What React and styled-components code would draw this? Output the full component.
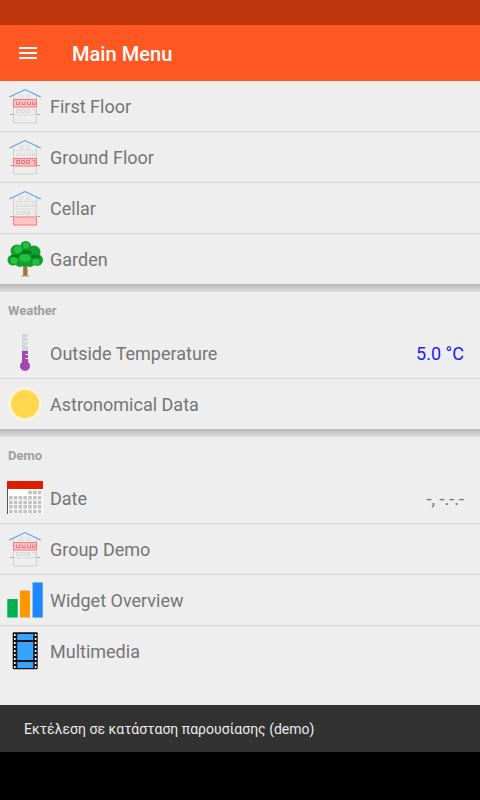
import React from 'react';
import styled, { createGlobalStyle } from 'styled-components';

const GlobalStyle = createGlobalStyle`
  html, body {
    margin: 0;
    padding: 0;
    background: #000;
    font-family: Roboto, "Liberation Sans", sans-serif;
  }
`;

const floorBands = { first: 11.5, ground: 19.5, cellar: 27 };

const HouseIcon = ({ floor }) => (
  <svg width="36" height="36" viewBox="0 0 36 36" fill="none">
    <path d="M6.5 7v28h23V7" stroke="#d0d0d0" strokeWidth="1" />
    <path d="M6.5 11.5h23M6.5 19h23M6.5 27h23" stroke="#d4d4d4" strokeWidth="0.8" />
    <rect x="6.5" y={floorBands[floor]} width="23" height={floor === 'cellar' ? 8 : 7.5} fill="#ffc4c8" stroke="#ff7b7b" />
    <path d="M2.3 9 18 1.5 33.7 9" stroke="#5a9cec" strokeWidth="1.1" />
    <path d="M3 26.5h3M30 26.5h3" stroke="#777" strokeWidth="0.6" />
    <path d="M12.5 6.7h3.5v3h-3.5zM19.5 6.7h3.5v3h-3.5z" stroke="#d4d4d4" strokeWidth="0.7" />
    <path
      d="M9.5 13.5v3h3v-3M15 13.5v3h3v-3M20.5 13.5v3h3v-3M25.5 13.5v3h2.5v-3"
      stroke={floor === 'first' ? '#ee5f5f' : '#cfcfcf'}
      strokeWidth="0.8"
    />
    <path
      d="M9.5 21.5h3v3h-3zM14.5 21.5h3v3h-3zM19.5 21.5h3v3h-3zM25.5 21.5h2.5v5"
      stroke={floor === 'ground' ? '#ee5f5f' : '#cfcfcf'}
      strokeWidth="0.8"
    />
  </svg>
);

const TreeIcon = () => (
  <svg width="36" height="36" viewBox="0 0 36 36">
    <path d="M16.3 20h4l.2 15h-4.4z" fill="#a0703c" />
    <path d="M14.5 34.5h7.5l.8 1h-9z" fill="#c09a6a" />
    <g fill="#12a02c">
      <circle cx="18.7" cy="5.5" r="5.5" />
      <circle cx="10" cy="10" r="6.5" />
      <circle cx="27" cy="11" r="6.5" />
      <circle cx="6" cy="19" r="5.5" />
      <circle cx="30" cy="19" r="6" />
      <circle cx="18" cy="16" r="9.5" />
      <circle cx="13" cy="21" r="5" />
      <circle cx="23" cy="21" r="5" />
    </g>
    <g fill="#0a7c20">
      <ellipse cx="18" cy="11.5" rx="7" ry="2.5" />
      <ellipse cx="28" cy="15.5" rx="5" ry="2" />
      <ellipse cx="9" cy="15" rx="5" ry="1.8" />
    </g>
    <g fill="#25bf41">
      <circle cx="11" cy="8.5" r="4" />
      <circle cx="19" cy="4.5" r="3" />
      <ellipse cx="18" cy="17" rx="6" ry="4" />
      <circle cx="7" cy="19.5" r="3.5" />
      <circle cx="29" cy="21" r="3.5" />
    </g>
  </svg>
);

const ThermometerIcon = () => (
  <svg width="36" height="40" viewBox="0 0 36 40">
    <rect x="15" y="0.5" width="6" height="32" rx="3" fill="#cfd8dc" />
    <path d="M15 18h6v14h-6z" fill="#a346b0" />
    <circle cx="18" cy="33" r="5" fill="#a346b0" />
    <path d="M18.5 4.5H21M18.5 8.5H21M18.5 12.5H21M18.5 21.5H21M18.5 25.5H21" stroke="#fff" strokeWidth="1" />
  </svg>
);

const SunIcon = () => (
  <svg width="36" height="36" viewBox="0 0 36 36">
    <circle cx="18" cy="18" r="17" fill="#f8f3dc" />
    <circle cx="18" cy="18" r="14" fill="#ffd84d" />
  </svg>
);

const calendarCols = [2, 6.8, 11.6, 16.4, 21.2, 26, 30.8];
const calendarRows = [10.7, 16, 20.7, 25, 29.7];

const CalendarIcon = () => (
  <svg width="36" height="36" viewBox="0 0 36 36">
    <rect x="0" y="1" width="36" height="33" fill="#fff" />
    <rect x="0" y="1" width="36" height="8" fill="#dd1c00" />
    <path d="M.5 9v25" stroke="#555" strokeWidth="1" />
    {calendarRows.map((y, r) =>
      calendarCols.map((x, c) =>
        r === 0 && c < 4 ? null : <rect key={`${r}-${c}`} x={x} y={y} width="3.6" height="3.6" fill="#c4c4c4" />
      )
    )}
  </svg>
);

const BarsIcon = () => (
  <svg width="38" height="38" viewBox="0 0 38 38">
    <rect x="0.3" y="18" width="11" height="19.5" fill="#00b050" />
    <rect x="13.7" y="9" width="10.6" height="28.5" fill="#ff9800" />
    <rect x="27" y="0.5" width="10.7" height="37" fill="#1e88ff" />
  </svg>
);

const FilmIcon = () => (
  <svg width="36" height="38" viewBox="0 0 36 38">
    <rect x="5.7" y="0.3" width="25" height="37" rx="1" fill="#111" />
    <rect x="10.3" y="2" width="16" height="6" fill="#36a4ff" />
    <rect x="10.3" y="10" width="16" height="18" fill="#36a4ff" />
    <rect x="10.3" y="30" width="16" height="6" fill="#36a4ff" />
    <path
      d="M7 2h1.6v2H7zM7 6h1.6v2H7zM7 10h1.6v2H7zM7 14h1.6v2H7zM7 18h1.6v2H7zM7 22h1.6v2H7zM7 26h1.6v2H7zM7 30h1.6v2H7zM7 34h1.6v2H7zM27.8 2h1.6v2h-1.6zM27.8 6h1.6v2h-1.6zM27.8 10h1.6v2h-1.6zM27.8 14h1.6v2h-1.6zM27.8 18h1.6v2h-1.6zM27.8 22h1.6v2h-1.6zM27.8 26h1.6v2h-1.6zM27.8 30h1.6v2h-1.6zM27.8 34h1.6v2h-1.6z"
      fill="#fff"
    />
  </svg>
);

const App = () => (
  <>
    <GlobalStyle />
    <Screen>
      <StatusBar />
      <Toolbar>
        <MenuButton>
          <span />
          <span />
          <span />
        </MenuButton>
        <Title>Main Menu</Title>
      </Toolbar>
      <Content>
        <Group>
          <MenuRow icon={<HouseIcon floor="first" />} label="First Floor" />
          <MenuRow icon={<HouseIcon floor="ground" />} label="Ground Floor" />
          <MenuRow icon={<HouseIcon floor="cellar" />} label="Cellar" />
          <MenuRow icon={<TreeIcon />} label="Garden" last />
        </Group>
        <GroupShadow />
        <GroupTitle>Weather</GroupTitle>
        <Group>
          <MenuRow icon={<ThermometerIcon />} label="Outside Temperature" value="5.0 °C" valueColor="#1a1aff" />
          <MenuRow icon={<SunIcon />} label="Astronomical Data" last />
        </Group>
        <GroupShadow />
        <GroupTitle>Demo</GroupTitle>
        <Group>
          <MenuRow icon={<CalendarIcon />} label="Date" value="-, -.-.-" />
          <MenuRow icon={<HouseIcon floor="first" />} label="Group Demo" />
          <MenuRow icon={<BarsIcon />} label="Widget Overview" />
          <MenuRow icon={<FilmIcon />} label="Multimedia" last />
        </Group>
      </Content>
      <Snackbar>Εκτέλεση σε κατάσταση παρουσίασης (demo)</Snackbar>
      <NavBar />
    </Screen>
  </>
);

const MenuRow = ({ icon, label, value, valueColor, last }) => (
  <Row $last={last}>
    <IconSlot>{icon}</IconSlot>
    <Label>{label}</Label>
    {value && <Value $color={valueColor}>{value}</Value>}
  </Row>
);

export default App;

const Screen = styled.div`
  display: flex;
  flex-direction: column;
  width: 480px;
  height: 800px;
  overflow: hidden;
  background: #eeeeee;
`;

const StatusBar = styled.div`
  flex: none;
  height: 25px;
  background: #bf360c;
`;

const Toolbar = styled.header`
  flex: none;
  display: flex;
  align-items: center;
  height: 56px;
  padding-left: 19px;
  background: #ff5722;
`;

const MenuButton = styled.div`
  display: flex;
  flex-direction: column;
  gap: 3px;
  width: 18px;
  margin-right: 35px;

  span {
    display: block;
    height: 2px;
    background: #fff;
  }
`;

const Title = styled.h1`
  margin: 0;
  padding-top: 2px;
  font-size: 20px;
  font-weight: 500;
  letter-spacing: 0.05px;
  color: #fff;
`;

const Content = styled.main`
  flex: 1;
  min-height: 0;
`;

const Group = styled.section`
  display: flex;
  flex-direction: column;
`;

const GroupShadow = styled.div`
  height: 8px;
  background: linear-gradient(#b8b8b8, #dedede);
`;

const GroupTitle = styled.h2`
  display: flex;
  align-items: center;
  height: 36px;
  margin: 0;
  font-size: 13px;
  font-weight: 700;
  padding-left: 8px;
  color: #9e9e9e;
`;

const Row = styled.div`
  display: flex;
  align-items: center;
  box-sizing: border-box;
  height: ${(p) => (p.$last ? '50px' : '51px')};
  padding: 0 16px 0 7px;
  border-bottom: ${(p) => (p.$last ? 'none' : '1px solid #d4d4d4')};
`;

const IconSlot = styled.div`
  display: flex;
  align-items: center;
  justify-content: center;
  flex: none;
  width: 36px;
  height: 40px;
  margin-right: 7px;
`;

const Label = styled.span`
  flex: 1;
  font-size: 18px;
  color: #757575;
`;

const Value = styled.span`
  font-size: 18px;
  color: ${(p) => p.$color || '#757575'};
`;

const Snackbar = styled.div`
  flex: none;
  display: flex;
  align-items: center;
  height: 47px;
  padding-left: 24px;
  font-size: 14px;
  letter-spacing: 0.02px;
  color: #ebebeb;
  background: #323232;
`;

const NavBar = styled.div`
  flex: none;
  height: 48px;
  background: #000;
`;
